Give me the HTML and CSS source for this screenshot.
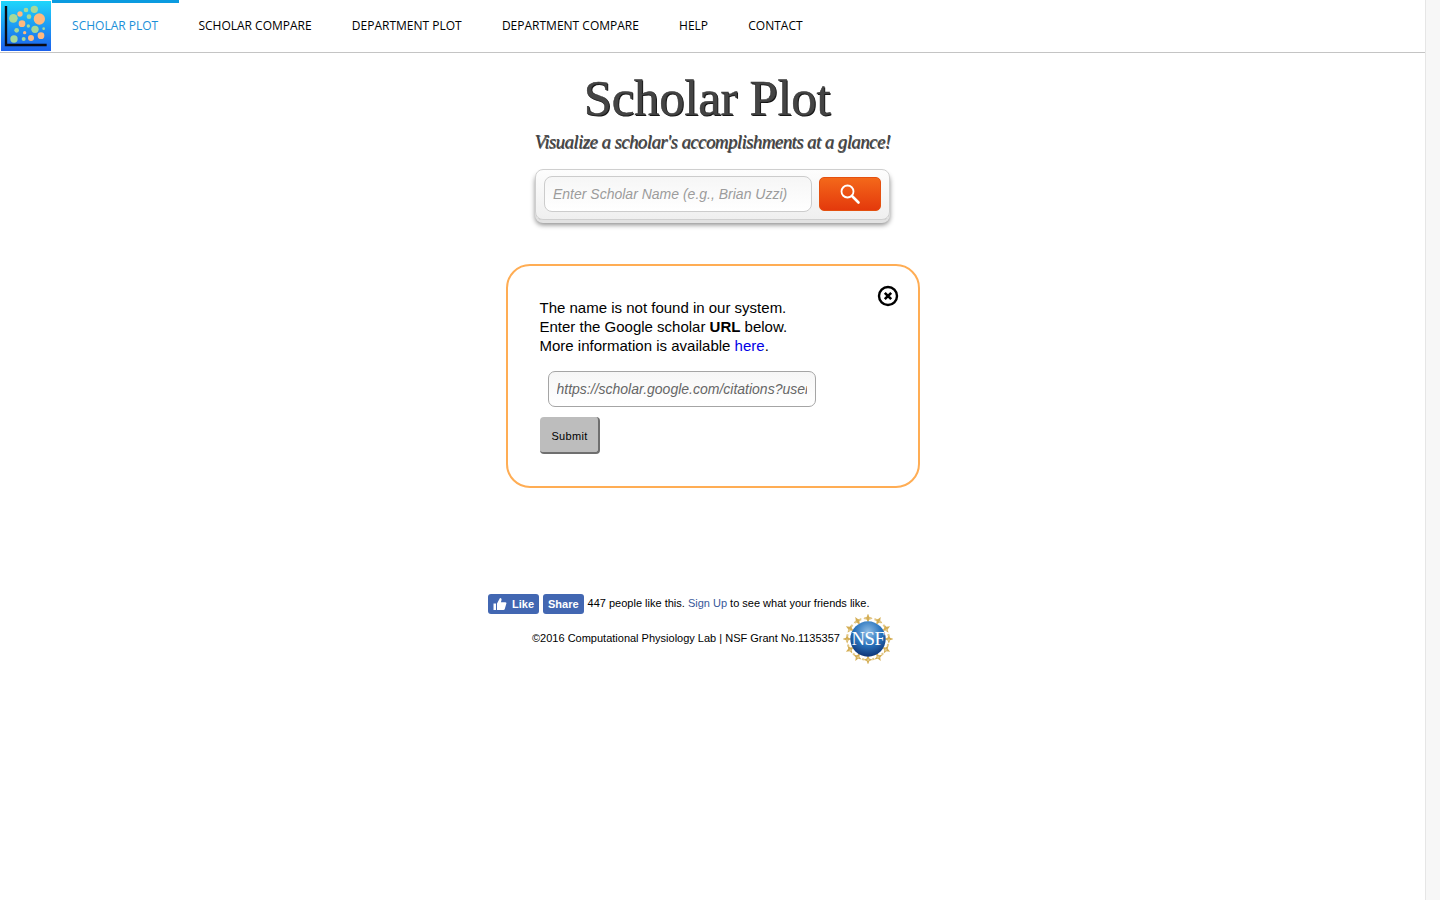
FILE: index.html
```html
<!DOCTYPE html>
<html>
<head>
    <title>Scholar Plot</title>
    <link rel="stylesheet" href="styles.css">
</head>
<body>
<div class="page">
    <div class="navbar">
        <a class="logo" href="#">
            <svg width="51" height="51" viewBox="0 0 153 153">
                <defs>
                    <linearGradient id="logoBg" x1="0" y1="0" x2="0" y2="1">
                        <stop offset="0" stop-color="#1fd6fb"/>
                        <stop offset="1" stop-color="#1b5fec"/>
                    </linearGradient>
                </defs>
                <rect x="3" y="3" width="150" height="150" fill="url(#logoBg)"/>
                <g fill="#a5d99a">
                    <circle cx="40" cy="55" r="13"/>
                    <circle cx="78" cy="30" r="7"/>
                    <circle cx="103" cy="28" r="11"/>
                    <circle cx="87" cy="50" r="7"/>
                    <circle cx="85" cy="78" r="5"/>
                    <circle cx="50" cy="91" r="7"/>
                    <circle cx="105" cy="88" r="11"/>
                    <circle cx="131" cy="86" r="4"/>
                    <circle cx="71" cy="117" r="6"/>
                    <circle cx="42" cy="117" r="11"/>
                </g>
                <g fill="#ffb97f">
                    <circle cx="60" cy="42" r="8"/>
                    <circle cx="118" cy="57" r="17"/>
                    <circle cx="66" cy="71" r="10"/>
                    <circle cx="74" cy="98" r="5"/>
                    <circle cx="123" cy="107" r="10"/>
                    <circle cx="93" cy="114" r="9"/>
                </g>
                <path d="M18 18V135H140" fill="none" stroke="#0b0b14" stroke-width="7"/>
            </svg>
        </a>
        <a class="tab active" href="#">SCHOLAR PLOT</a>
        <a class="tab" href="#">SCHOLAR COMPARE</a>
        <a class="tab" href="#">DEPARTMENT PLOT</a>
        <a class="tab" href="#">DEPARTMENT COMPARE</a>
        <a class="tab" href="#">HELP</a>
        <a class="tab" href="#">CONTACT</a>
    </div>

    <div class="content">
        <h1 class="title">Scholar Plot</h1>
        <h2 class="subtitle">Visualize a scholar's accomplishments at a glance!</h2>

        <form class="search-box">
            <input class="search-input" type="text" placeholder="Enter Scholar Name (e.g., Brian Uzzi)">
            <button class="search-btn" type="button">
                <svg width="22" height="22" viewBox="0 0 22 22">
                    <circle cx="8.500" cy="8.500" r="6" fill="none" stroke="#fff" stroke-width="1.800"/>
                    <path d="M13 13L19.500 19.500" fill="none" stroke="#fff" stroke-width="2.600" stroke-linecap="round"/>
                </svg>
            </button>
        </form>

        <div class="notice">
            <button class="close-btn" type="button">
                <svg width="22" height="22" viewBox="0 0 22 22">
                    <circle cx="11" cy="11" r="9" fill="none" stroke="#000" stroke-width="2.400"/>
                    <path d="M7.800 7.800L14.200 14.200M14.200 7.800L7.800 14.200" fill="none" stroke="#000" stroke-width="2.600"/>
                </svg>
            </button>
            <p class="notice-text">
                The name is not found in our system.<br>
                Enter the Google scholar <b>URL</b> below.<br>
                More information is available <a href="#">here</a>.
            </p>
            <input class="url-input" type="text" placeholder="https://scholar.google.com/citations?user=">
            <button class="submit-btn" type="button">Submit</button>
        </div>

        <div class="footer">
            <div class="fb-row">
                <span class="fb-btn">
                    <svg width="14" height="14" viewBox="0 0 14 14">
                        <path d="M0.500 6.500H3V13H0.500ZM4 6.500L7 1C8.500 1 8.800 2.200 8.400 3.400L7.900 5.200H12.300C13.400 5.200 13.700 6.200 13.200 7L11.700 12.200C11.500 12.800 11 13 10.400 13H4Z" fill="#fff"/>
                    </svg>
                    Like
                </span>
                <span class="fb-btn">Share</span>
                <span class="fb-text">447 people like this. <a href="#">Sign Up</a> to see what your friends like.</span>
            </div>
            <div class="copy-row">
                <span class="copy-text">©2016 Computational Physiology Lab | NSF Grant No.1135357</span>
                <svg class="nsf" width="50" height="50" viewBox="1 1 48 48">
                    <defs>
                        <radialGradient id="nsfBg" cx="0.500" cy="0.300" r="0.750">
                            <stop offset="0" stop-color="#8fbde6"/>
                            <stop offset="0.500" stop-color="#2a74bd"/>
                            <stop offset="1" stop-color="#0a2a6b"/>
                        </radialGradient>
                        <path id="nsfStar" d="M25 0.500L26.300 3.800L29.500 5L26.300 6.200L25 9.500L23.700 6.200L20.500 5L23.700 3.800Z"/>
                    </defs>
                    <g fill="#d4ae55">
                        <use href="#nsfStar"/>
                        <use href="#nsfStar" transform="rotate(30 25 25)"/>
                        <use href="#nsfStar" transform="rotate(60 25 25)"/>
                        <use href="#nsfStar" transform="rotate(90 25 25)"/>
                        <use href="#nsfStar" transform="rotate(120 25 25)"/>
                        <use href="#nsfStar" transform="rotate(150 25 25)"/>
                        <use href="#nsfStar" transform="rotate(180 25 25)"/>
                        <use href="#nsfStar" transform="rotate(210 25 25)"/>
                        <use href="#nsfStar" transform="rotate(240 25 25)"/>
                        <use href="#nsfStar" transform="rotate(270 25 25)"/>
                        <use href="#nsfStar" transform="rotate(300 25 25)"/>
                        <use href="#nsfStar" transform="rotate(330 25 25)"/>
                    </g>
                    <circle cx="25" cy="25" r="20" fill="none" stroke="#e3c888" stroke-width="2" stroke-dasharray="2 3"/>
                    <circle cx="25" cy="25" r="17" fill="url(#nsfBg)"/>
                    <text class="nsf-text" x="25" y="31">NSF</text>
                </svg>
            </div>
        </div>
    </div>
</div>
</body>
</html>
```

FILE: styles.css
```css
html, body {
    margin: 0;
    padding: 0;
    height: 100%;
}

body {
    background-color: #f7f7f7;
    font-family: "Liberation Sans", Arial, sans-serif;
    color: #000;
}

.page {
    width: 1425px;
    height: 900px;
    background-color: #fff;
    border-right: 1px solid #e6e6e6;
    overflow: hidden;
}

.navbar {
    display: flex;
    height: 52px;
    border-bottom: 1px solid #c4c4c4;
}

.logo {
    display: block;
    width: 51px;
    height: 51px;
    margin-right: 1px;
}

.logo svg {
    display: block;
}

.tab {
    padding: 14px 20.100px 0;
    height: 35px;
    border-top: 3px solid transparent;
    font-family: "Open Sans", sans-serif;
    font-size: 12px;
    line-height: 18px;
    color: #000;
    text-decoration: none;
}

.tab.active {
    margin-right: -0.500px;
    padding-right: 20.600px;
    border-top-color: #0b9be0;
    color: #1b8fd8;
}

.content {
    display: flex;
    flex-direction: column;
    align-items: center;
}

.title {
    margin: 18px 11px 0 0;
    font-family: "Liberation Serif", "Times New Roman", serif;
    font-size: 51px;
    font-weight: normal;
    line-height: 54px;
    letter-spacing: -0.350px;
    color: #444;
    -webkit-text-stroke: 0.500px #333;
    text-shadow: 1px 1px 0 #111;
}

.subtitle {
    margin: 3px 0 0;
    font-family: "Liberation Serif", "Times New Roman", serif;
    font-size: 19px;
    font-style: italic;
    font-weight: normal;
    line-height: 28px;
    letter-spacing: -0.620px;
    color: #444;
    text-shadow: 0.500px 0.500px 0 #555;
}

.search-box {
    display: flex;
    align-items: center;
    box-sizing: border-box;
    width: 355px;
    height: 51px;
    margin: 13px 0 0;
    padding: 0 8px 2px;
    gap: 7px;
    background: linear-gradient(#fdfdfd, #efefef);
    border: 1px solid #cfcfcf;
    border-radius: 8px;
    box-shadow: 0 3px 0 #e2e2e2, 0 5px 5px rgba(0, 0, 0, 0.450);
}

.search-input {
    box-sizing: border-box;
    flex: none;
    width: 268px;
    height: 36px;
    padding: 0 8px;
    background: linear-gradient(#f6f6f6, #fff);
    border: 1px solid #ccc;
    border-radius: 8px;
    font-family: "Liberation Sans", Arial, sans-serif;
    font-size: 14px;
    font-style: italic;
}

.search-input::placeholder {
    color: #9c9c9c;
    opacity: 1;
}

.search-btn {
    display: flex;
    flex: none;
    align-items: center;
    justify-content: center;
    width: 62px;
    height: 34px;
    padding: 0;
    background: linear-gradient(#f4681a, #e4390c);
    border: 1px solid #e4500f;
    border-radius: 5px;
}

.notice {
    position: relative;
    box-sizing: border-box;
    width: 414px;
    height: 224px;
    margin: 44px 0 0;
    padding: 32px 32px 0;
    background-color: #fff;
    border: 2px solid #ffad54;
    border-radius: 24px;
}

.close-btn {
    position: absolute;
    top: 19px;
    right: 19px;
    padding: 0;
    background: none;
    border: none;
    line-height: 0;
}

.notice-text {
    margin: 0;
    font-size: 15px;
    line-height: 19px;
}

.notice-text a {
    color: #0000e6;
    text-decoration: none;
}

.url-input {
    display: block;
    box-sizing: border-box;
    width: 268px;
    height: 36px;
    margin: 16px 0 0 8px;
    padding: 0 8px;
    background: linear-gradient(#f6f6f6, #fff);
    border: 1px solid #a5a5a5;
    border-radius: 7px;
    font-family: "Liberation Sans", Arial, sans-serif;
    font-size: 14px;
    font-style: italic;
}

.url-input::placeholder {
    color: #666;
    opacity: 1;
}

.submit-btn {
    display: block;
    box-sizing: border-box;
    width: 60px;
    height: 37px;
    margin: 10px 0 0;
    padding: 3px 0 0 2px;
    background-color: #bdbdbd;
    border: none;
    border-right: 2px solid #6f6f6f;
    border-bottom: 2px solid #6f6f6f;
    border-radius: 4px;
    font-family: "Liberation Sans", Arial, sans-serif;
    font-size: 11px;
    letter-spacing: 0.300px;
    color: #000;
}

.footer {
    display: flex;
    flex-direction: column;
    box-sizing: border-box;
    width: 413px;
    margin: 106px 0 0;
    padding-right: 26px;
}

.fb-row {
    display: flex;
    align-items: center;
    gap: 4px;
    margin-left: -18px;
    height: 20px;
}

.fb-btn {
    display: flex;
    align-items: center;
    gap: 4px;
    height: 20px;
    padding: 0 5px;
    background-color: #4267b2;
    border-radius: 3px;
    font-size: 11px;
    font-weight: bold;
    color: #fff;
}

.fb-btn svg {
    margin-right: 1px;
}

.fb-text {
    margin-bottom: 2px;
    font-size: 11px;
    white-space: nowrap;
}

.fb-text a {
    color: #365899;
    text-decoration: none;
}

.copy-row {
    display: flex;
    align-items: center;
    gap: 3px;
    height: 50px;
    margin: 0 0 0 26px;
    font-size: 11px;
    white-space: nowrap;
}

.copy-text {
    margin-bottom: 2px;
}

.nsf {
    flex: none;
}

.nsf-text {
    font-family: "Liberation Serif", serif;
    font-size: 18px;
    letter-spacing: -0.500px;
    fill: #fff;
    text-anchor: middle;
}
```
